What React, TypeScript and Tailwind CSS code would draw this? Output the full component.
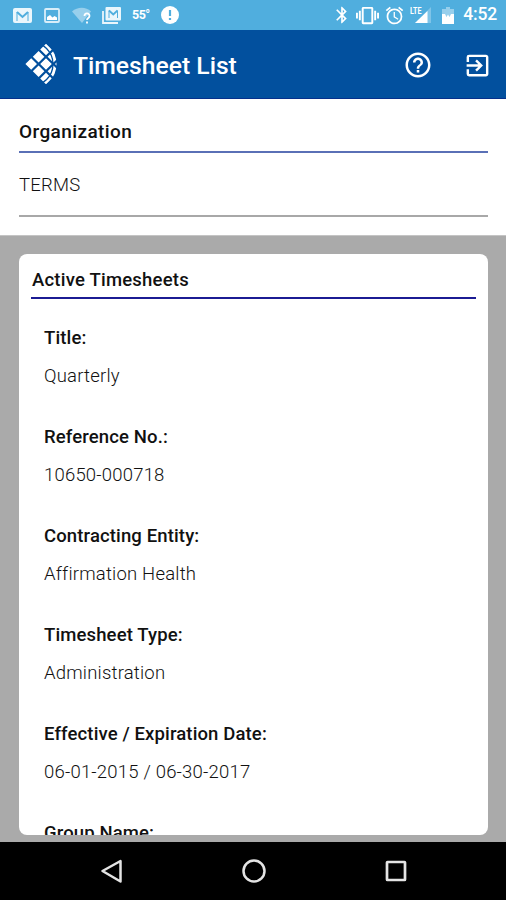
import { MdAlarm, MdBluetooth, MdExitToApp, MdHelpOutline, MdVibration } from 'react-icons/md';

interface Field {
  label: string;
  value?: string;
}

const fields: Field[] = [
  { label: 'Title:', value: 'Quarterly' },
  { label: 'Reference No.:', value: '10650-000718' },
  { label: 'Contracting Entity:', value: 'Affirmation Health' },
  { label: 'Timesheet Type:', value: 'Administration' },
  { label: 'Effective / Expiration Date:', value: '06-01-2015 / 06-30-2017' },
  { label: 'Group Name:' },
];

function StatusBar() {
  return (
    <div className="flex h-[30px] shrink-0 items-center justify-between bg-[#50aede] pl-[13px] pr-[9px] text-white">
      <div className="flex items-center">
        <svg width="19" height="15" viewBox="0 0 19 15">
          <rect width="19" height="15" rx="2" fill="#eaf6fc" />
          <path d="M4 4l5.500 5L15 4" fill="none" stroke="#50aede" strokeWidth="2" />
          <path d="M4 4v9M15 4v9" fill="none" stroke="#50aede" strokeWidth="1" />
        </svg>
        <svg className="ml-3" width="16" height="15" viewBox="0 0 16 15">
          <rect x="1" y="1" width="14" height="13" rx="1" fill="none" stroke="#d8eef9" strokeWidth="1.800" />
          <path d="M3 12V9l3-2 2.500 2.500L10.500 8l2.500 1.500V12z" fill="#fff" />
        </svg>
        <svg className="ml-3" width="20" height="17" viewBox="0 0 20 17">
          <path d="M0 4.500C5.500-.5 14-.5 19 4.500L10 16z" fill="#97cfec" />
          <path d="M12.500 9c0-3.500 5-3.500 5 0 0 2-2.500 2-2.500 4M15 14.500v2" fill="none" stroke="#fff" strokeWidth="1.800" />
        </svg>
        <svg className="ml-[10px]" width="20" height="17" viewBox="0 0 20 17">
          <path d="M1 4v12h15" fill="none" stroke="#eaf6fc" strokeWidth="1.800" />
          <rect x="3.500" y="0" width="15.500" height="13.500" rx="1" fill="#eaf6fc" />
          <path d="M7 3.500l4.250 4 4.250-4" fill="none" stroke="#50aede" strokeWidth="1.800" />
          <path d="M7 3.500V11M15.500 3.500V11" fill="none" stroke="#50aede" strokeWidth="1" />
        </svg>
        <span className="ml-[10px] w-[18px] text-[12.500px] font-bold leading-none tracking-[-0.5px]">55°</span>
        <svg className="ml-[11px]" width="18" height="18" viewBox="0 0 18 18">
          <circle cx="9" cy="9" r="9" fill="#fff" />
          <path d="M9 4v6M9 12v2" stroke="#50aede" strokeWidth="2.200" />
        </svg>
      </div>
      <div className="flex items-center">
        <MdBluetooth size={20} />
        <MdVibration className="ml-[4px]" size={23} />
        <MdAlarm className="ml-[5px]" size={21} />
        <svg className="ml-[5px]" width="22" height="18" viewBox="0 0 22 18">
          <path d="M21 1v16H5z" fill="#7fc4e8" />
          <path d="M17.500 5v12H5z" fill="#fff" />
          <text x="0" y="8" fontSize="9" fontWeight="700" fill="#fff" textLength="11.500" lengthAdjust="spacingAndGlyphs">
            LTE
          </text>
        </svg>
        <svg className="ml-[10px]" width="12" height="17" viewBox="0 0 12 17">
          <path d="M4 0h4v2h4v15H0V2h4z" fill="#97cfec" />
          <path d="M0 7h12v10H0z" fill="#fff" />
          <path d="M3 7l1.500 3L6 7.500 7.500 10 9 7z" fill="#97cfec" />
        </svg>
        <span className="ml-[9px] text-[17.500px] font-medium leading-none tracking-[-0.2px]">4:52</span>
      </div>
    </div>
  );
}

function Logo() {
  return (
    <svg className="-mt-[2px]" width="34" height="40" viewBox="0 0 34 40">
      <clipPath id="logo-arc">
        <circle cx="7" cy="20" r="25.500" />
      </clipPath>
      <g clipPath="url(#logo-arc)">
        <path
          fill="#fff"
          d="M7.200 14.200l5.800 5.800-5.800 5.800L1.400 20zM14.600 6.900l5.800 5.800-5.800 5.800-5.800-5.800zM14.600 21.500l5.800 5.800-5.800 5.800-5.800-5.800zM22-.3l5.800 5.800-5.800 5.800-5.800-5.800zM22 14.200l5.800 5.800-5.800 5.800-5.800-5.800zM22 28.700l5.800 5.800-5.800 5.800-5.800-5.800zM29.400 6.900l5.800 5.800-5.800 5.800-5.800-5.800zM29.400 21.500l5.800 5.800-5.800 5.800-5.800-5.800zM36.800 14.200l5.800 5.800-5.800 5.800-5.800-5.800z"
        />
        <circle cx="7" cy="20" r="22" fill="none" stroke="#02509e" strokeWidth="1.300" />
      </g>
    </svg>
  );
}

function AppBar() {
  return (
    <header className="flex h-[69px] shrink-0 items-center border-b border-[#06308c] bg-[#02509e] pl-6 pr-[14px] pt-[2px] text-white">
      <Logo />
      <h1 className="ml-[15px] pt-[2px] text-[24.700px] font-medium">Timesheet List</h1>
      <MdHelpOutline className="ml-auto" size={30} />
      <MdExitToApp className="ml-[30px]" size={29} />
    </header>
  );
}

function NavBar() {
  return (
    <nav className="flex h-[58px] shrink-0 items-center justify-between bg-black pl-[100px] pr-[99px]">
      <svg width="23" height="24" viewBox="0 0 23 24" fill="none" stroke="#e4e4e4" strokeWidth="2.500">
        <path d="M20.500 2v20.500L2.500 12z" strokeLinejoin="round" />
      </svg>
      <svg width="24" height="24" viewBox="0 0 24 24" fill="none" stroke="#e4e4e4" strokeWidth="2.500">
        <circle cx="12" cy="12" r="10.500" />
      </svg>
      <svg width="22" height="22" viewBox="0 0 22 22" fill="none" stroke="#e4e4e4" strokeWidth="2.700">
        <rect x="2" y="2" width="18" height="18" rx="0.500" />
      </svg>
    </nav>
  );
}

export default function App() {
  return (
    <div className="flex h-screen flex-col overflow-hidden bg-[#aaa] font-['Roboto',sans-serif]">
      <StatusBar />
      <AppBar />
      <section className="h-[137px] shrink-0 border-b border-[#c4c4c4] bg-white pl-[19px] pr-[18px] pt-[21px]">
        <h2 className="text-[19px] font-medium leading-6 tracking-[0.4px] text-[#111]">Organization</h2>
        <div className="mt-[7px] border-t-2 border-[#5a70b6]" />
        <p className="mt-5 text-[18.500px] font-light leading-6 tracking-[0.2px] text-[#111]">TERMS</p>
        <div className="mt-[18px] border-t-2 border-[#a8a8a8]" />
      </section>
      <main className="min-h-0 flex-1 pb-[7px] pl-[19px] pr-[18px] pt-[18px]">
        <div className="h-full overflow-hidden rounded-lg bg-white px-[12px] pt-[14px]">
          <h2 className="pl-px text-[18.500px] font-medium leading-6 tracking-[0.22px] text-[#111]">
            Active Timesheets
          </h2>
          <div className="mt-[5px] border-t-2 border-[#1b1b93]" />
          <dl className="px-[13px] pt-[27px]">
            {fields.map((field) => (
              <div key={field.label} className="h-[99px]">
                <dt className="text-[18.500px] font-medium leading-6 tracking-[0.13px] text-[#111]">{field.label}</dt>
                {field.value && (
                  <dd className="mt-[14px] text-[18.500px] font-light leading-6 tracking-[0.2px] text-[#111]">
                    {field.value}
                  </dd>
                )}
              </div>
            ))}
          </dl>
        </div>
      </main>
      <NavBar />
    </div>
  );
}
